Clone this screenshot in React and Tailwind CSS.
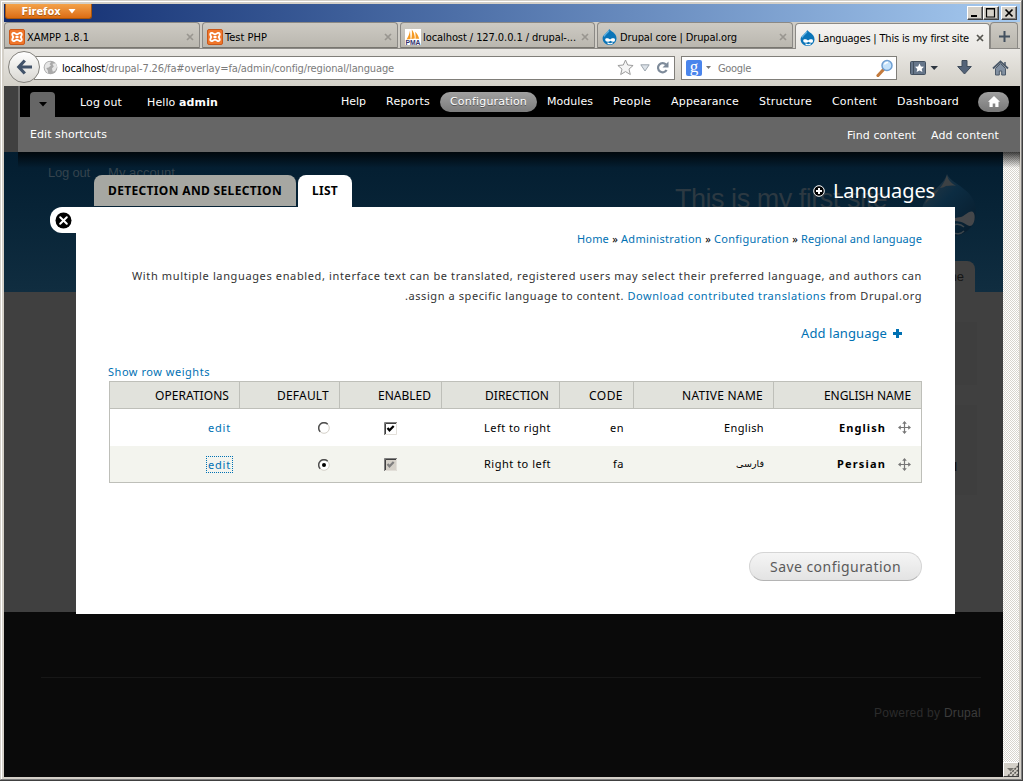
import React, { useLayoutEffect, useRef, useState } from "react";

const TAHOMA = "font-['DejaVu_Sans_Condensed','DejaVu_Sans',sans-serif]";
const VERDANA = "font-['DejaVu_Sans',sans-serif]";
const LUCIDA = "font-['Noto_Sans','Open_Sans',sans-serif]";

// Text set to an exact width by spreading the difference between its letters.
function Fit({ w, className = "", children }) {
  const ref = useRef(null);
  const [style, setStyle] = useState({});
  useLayoutEffect(() => {
    const el = ref.current;
    const natural = el.getBoundingClientRect().width;
    const count = Math.max(1, el.textContent.length);
    setStyle({ width: w, letterSpacing: (w - natural) / count });
  }, [w]);
  return (
    <span ref={ref} style={style} className={`inline-block shrink-0 whitespace-nowrap ${className}`}>
      {children}
    </span>
  );
}

function XamppIcon() {
  return (
    <svg width="16" height="16" viewBox="0 0 16 16" className="shrink-0">
      <rect x="0.5" y="0.5" width="15" height="15" rx="1.5" fill="#f0762a" stroke="#c9581a" />
      <path d="M5.300 4C3.200 3.600 2.900 5 3.600 6.600L4.300 8l-.7 1.400C2.900 11 3.200 12.400 5.300 12L8 10.500l2.700 1.500c2.100.4 2.400-1 1.700-2.600L11.700 8l.7-1.400c.7-1.600.4-3-1.700-2.600L8 5.500zM6.500 8h3" fill="none" stroke="#fff" strokeWidth="1.900" strokeLinejoin="round" />
    </svg>
  );
}

function PmaIcon() {
  return (
    <svg width="16" height="16" viewBox="0 0 16 16" className="shrink-0">
      <rect width="16" height="16" fill="#fff" />
      <path d="M1.500 10.500C3 8 4.500 5 5 1.500l.6 8.600zM6.300 10C7 7 7 4 6.800 .5c2 2.500 3 6 3 9.100zM10.500 9.800c.3-2.500 0-5-.5-7 2.200 2 3.600 4.600 4.200 7z" fill="#f59a23" />
      <text x="8" y="15.800" textAnchor="middle" fontSize="6.500" fontWeight="bold" textLength="15" lengthAdjust="spacingAndGlyphs" fill="#33336c" fontFamily="Liberation Sans">PMA</text>
    </svg>
  );
}

function DrupalIcon() {
  return (
    <svg width="16" height="16" viewBox="0 0 16 16" className="shrink-0">
      <path d="M7.200 0C8.200 2.300 14.500 3.500 14.500 9.300c0 4-3.200 6.700-7 6.700S.6 13.200.6 9.300C.6 5.500 6 3.800 7.200 0z" fill="#0a74b8" />
      <path d="M7 1.500c-.6 2-4 3.300-4.800 6" fill="none" stroke="#5eb0e0" strokeWidth="1.200" />
      <path d="M3.200 10.700c0-2 3.200-1.700 4.900-.2 1.500-1.400 4.900-1.900 4.900.4s-2.700 2.300-4.500.9c-2 1.500-5.300 1-5.300-1.100z" fill="#fff" />
      <path d="M5.500 13.700c1.600 1.300 3.800 1.200 5.200.1" fill="none" stroke="#fff" strokeWidth="1.100" />
    </svg>
  );
}

function CloseX({ dark }) {
  return (
    <svg width="8" height="8" viewBox="0 0 8 8" className="shrink-0">
      <path d="M1 1l6 6M7 1L1 7" stroke={dark ? "#55544f" : "#999690"} strokeWidth="1.700" />
    </svg>
  );
}

function BrowserTab({ icon, title, w, width, active }) {
  return (
    <div
      className={`flex h-[26px] items-center rounded-t-[4px] border border-b-0 pl-[4px] pr-[5px] pt-[2px] text-[11px] text-black ${width} ${
        active ? "border-[#8b8985] bg-linear-to-b from-[#f5f4f2] to-[#eae8e4]" : "border-[#8b8985] bg-linear-to-b from-[#cdcac3] to-[#b9b6ae] shadow-[inset_0_-1px_0_#77756f]"
      }`}
    >
      {icon}
      <div className="flex grow pl-[2px] pt-[3px]">
        <Fit w={w}>{title}</Fit>
      </div>
      <CloseX dark={active} />
    </div>
  );
}

function WinButton({ children }) {
  return (
    <div className="flex h-[14px] w-[16px] items-center justify-center border border-b-[#404040] border-l-white border-r-[#404040] border-t-white bg-[#d4d0c8] shadow-[inset_-1px_-1px_0_#808080]">
      <svg width="14" height="12" viewBox="0 0 14 12" fill="none" stroke="#000">
        {children}
      </svg>
    </div>
  );
}

function TitleBar() {
  return (
    <div className="flex h-[18px] justify-between bg-linear-to-r from-[#102a6e] to-[#a6caf0]">
      <div className="ml-px flex h-[15px] w-[87px] items-center justify-center gap-[7px] rounded-b-[3px] border border-t-0 border-[#a8550c] bg-linear-to-b from-[#f3a248] to-[#dc6c10] text-[11px] font-bold text-white">
        <Fit w={39} className="pt-[2px] leading-[14px] [text-shadow:0_1px_0_#a8550c]">Firefox</Fit>
        <svg width="8" height="5" viewBox="0 0 8 5"><path d="M0.500 0h7L4 4.500z" fill="#fff" /></svg>
      </div>
      <div className="flex items-start pr-[3px] pt-[2px]">
        <WinButton><path d="M3 9h6" strokeWidth="2" /></WinButton>
        <WinButton><path d="M2.500 1v9h8V1M2 2h9" strokeWidth="1.200" /><path d="M2 1.500h9" /></WinButton>
        <div className="ml-[2px]">
          <WinButton><path d="M3.500 2.500l7 7M10.500 2.500l-7 7" strokeWidth="1.700" /></WinButton>
        </div>
      </div>
    </div>
  );
}

function TabStrip() {
  return (
    <div className="flex h-[27px] items-end gap-[2px] border-b border-[#8b8985] bg-[#d0cdc6]">
      <BrowserTab icon={<XamppIcon />} title="XAMPP 1.8.1" w={62} width="w-[196px]" />
      <BrowserTab icon={<XamppIcon />} title="Test PHP" w={42} width="w-[196px]" />
      <BrowserTab icon={<PmaIcon />} title="localhost / 127.0.0.1 / drupal-..." w={153} width="w-[195px]" />
      <BrowserTab icon={<DrupalIcon />} title="Drupal core | Drupal.org" w={117} width="w-[196px]" />
      <div className="-mb-px flex">
        <BrowserTab icon={<DrupalIcon />} title="Languages | This is my first site" w={151} width="w-[195px]" active />
      </div>
      <div className="-ml-[2px] flex h-[26px] w-[28px] items-center justify-center rounded-t-[4px] border border-b-0 border-[#8b8985] bg-linear-to-b from-[#cdcac3] to-[#b9b6ae] pt-[2px]">
        <svg width="11" height="11" viewBox="0 0 11 11"><path d="M5.500 0v11M0 5.500h11" stroke="#43505f" strokeWidth="2" /></svg>
      </div>
    </div>
  );
}

function NavBar() {
  return (
    <div className="flex h-[37px] items-center bg-linear-to-b from-[#eae8e4] to-[#d3d0c8] pl-[4px]">
      <div className="z-10 -mt-[2px] flex size-[32px] shrink-0 items-center justify-center rounded-full border border-[#84827d] bg-linear-to-b from-white to-[#d9d7d2]">
        <svg width="17" height="16" viewBox="0 0 17 16" fill="none" stroke="#42536a" strokeWidth="3.200">
          <path d="M8.800 1.500L2.800 8l6 6.500M3 8h13" />
        </svg>
      </div>
      <div className="-ml-[6px] flex h-[24px] w-[641px] items-center border border-[#807e79] bg-white pl-[8px] pr-[5px] text-[11px] text-[#7b7b7b]">
        <svg width="15" height="15" viewBox="0 0 16 16" className="shrink-0">
          <circle cx="8" cy="8" r="7.300" fill="#a9a9a9" />
          <path d="M2 5.500C4 2 6 1.500 8.500 2L7 4.500l1.500 1L6 8 3.500 8.500 5 11l.5 3C3 12.500 1 10 2 5.500zM10 4l4-.5 1 4-2 4-2.500 1L9.500 9l2-2z" fill="#e6e6e6" />
        </svg>
        <div className="flex grow pl-[4px] pt-[3px]">
          <Fit w={43} className="text-black">localhost</Fit>
          <Fit w={289}>/drupal-7.26/fa#overlay=fa/admin/config/regional/language</Fit>
        </div>
        <svg width="17" height="17" viewBox="0 0 17 17"><path d="M8.500 1l2.200 5 5.400.5-4.100 3.600 1.300 5.400-4.800-2.900-4.800 2.900L5 10.100.9 6.500 6.300 6z" fill="#f5f5f5" stroke="#9b9b9b" /></svg>
        <svg width="10" height="8" viewBox="0 0 10 8" className="ml-[6px]"><path d="M.8.800h8.400L5 7z" fill="#dce2e8" stroke="#9da6ae" /></svg>
        <svg width="13" height="13" viewBox="0 0 13 13" className="ml-[6px]" fill="none">
          <path d="M10 3.600A4.600 4.600 0 1 0 10.600 9" stroke="#7d8a99" strokeWidth="2.200" /><path d="M12.500.5v6h-6z" fill="#7d8a99" />
        </svg>
      </div>
      <div className="ml-[6px] flex h-[24px] w-[216px] items-center border border-[#807e79] bg-white px-[4px] text-[11px] text-[#7b7b7b]">
        <div className="flex size-[16px] items-center justify-center rounded-[2px] bg-[#4a85ec] pb-[2px] font-['Liberation_Serif',serif] text-[17px] leading-none text-white">g</div>
        <svg width="5" height="3" viewBox="0 0 5 3" className="ml-[4px]"><path d="M0 0h5L2.500 3z" fill="#777" /></svg>
        <div className="flex grow pl-[7px] pt-[3px]"><Fit w={33}>Google</Fit></div>
        <svg width="18" height="18" viewBox="0 0 18 18" className="mr-[-2px]">
          <path d="M8 10l-6 6.500" stroke="#c47b3d" strokeWidth="3.200" strokeLinecap="round" />
          <circle cx="11" cy="6.500" r="5" fill="#c4e2fb" stroke="#6f9fd2" strokeWidth="1.500" />
          <path d="M8.500 5.500c.5-1.500 2-2.300 3.500-2" stroke="#fff" strokeWidth="1.500" fill="none" />
        </svg>
      </div>
      <svg width="29" height="16" viewBox="0 0 29 16" className="ml-[13px]">
        <rect x=".5" y="1.500" width="15" height="13" rx="1" fill="#66768a" stroke="#43505f" />
        <path d="M3.500 2v12" stroke="#43505f" />
        <path d="M9.500 3.500l1.400 3 3.100.3-2.300 2.100.7 3.100-2.900-1.600L6.600 12l.7-3.100L5 6.800l3.100-.3z" fill="#fff" />
        <path d="M20.500 6h7.500L24.200 10z" fill="#2d3640" />
      </svg>
      <svg width="15" height="15" viewBox="0 0 15 15" className="ml-[18px]"><path d="M5 .5h5v6h4.300L7.500 14 .7 6.500H5z" fill="#536378" stroke="#3f4c5b" /></svg>
      <svg width="17" height="16" viewBox="0 0 17 16" className="ml-[20px]">
        <path d="M3.500 8.500V15h3.800v-4h2.400v4h3.800V8.500l-5-5z" fill="#8290a1" stroke="#4b5969" />
        <path d="M1 8.500L8.500 1.500 16 8.500" fill="none" stroke="#4b5969" strokeWidth="1.800" /><path d="M13 2v3" stroke="#4b5969" strokeWidth="1.500" />
      </svg>
    </div>
  );
}

const MENU_LEFT = [["Help", 25], ["Reports", 44]];
const MENU_RIGHT = [["Modules", 46], ["People", 38], ["Appearance", 68], ["Structure", 53], ["Content", 45], ["Dashboard", 62]];

function MenuItem({ label, w }) {
  return <div className="px-[10px] pt-px"><Fit w={w}>{label}</Fit></div>;
}

function AdminToolbar() {
  return (
    <div className={`relative z-30 flex h-[66px] bg-[#404040] text-[11px] text-white ${VERDANA}`}>
      <div className="flex w-[14px] flex-col" />
      <div className="flex grow flex-col bg-[#666]">
        <div className="ml-[2px] flex h-[31px] items-center bg-black">
          <div className="mt-[6px] ml-[10px] flex h-[25px] w-[25px] items-center justify-center rounded-t-[4px] bg-[#666]">
            <svg width="8" height="5" viewBox="0 0 8 5"><path d="M0 0h8L4 4.500z" fill="#000" /></svg>
          </div>
          <Fit w={42} className="ml-[25px] pt-[3px]">Log out</Fit>
          <Fit w={71} className="ml-[25px] pt-[3px]">Hello <b>admin</b></Fit>
          <div className="flex grow items-center justify-end pr-[11px] pt-px">
            {MENU_LEFT.map(([l, w]) => <MenuItem key={l} label={l} w={w} />)}
            <div className="flex h-[20px] items-center rounded-full bg-linear-to-b from-[#a0a0a0] to-[#7c7c7c] px-[10px] pt-px">
              <Fit w={77} className="[text-shadow:0_1px_0_#555]">Configuration</Fit>
            </div>
            {MENU_RIGHT.map(([l, w]) => <MenuItem key={l} label={l} w={w} />)}
            <div className="-mt-px ml-[9px] flex h-[20px] w-[31px] items-center justify-center rounded-full bg-linear-to-b from-[#a0a0a0] to-[#787878]">
              <svg width="12" height="11" viewBox="0 0 12 11"><path d="M6 0l6 5.800h-1.500V11H7.300V7.500H4.700V11H1.500V5.800H0z" fill="#fff" /></svg>
            </div>
          </div>
        </div>
        <div className="flex h-[35px] items-center justify-between pl-[12px] pr-[21px] pt-px">
          <Fit w={77}>Edit shortcuts</Fit>
          <div className="flex gap-[15px] pt-[2px]">
            <Fit w={69}>Find content</Fit>
            <Fit w={68}>Add content</Fit>
          </div>
        </div>
      </div>
      <div className="absolute left-[14px] right-0 top-full h-[16px] bg-linear-to-b from-black/75 to-transparent" />
    </div>
  );
}

function SiteLogo() {
  return (
    <svg width="56" height="64" viewBox="0 0 56 64">
      <defs>
        <linearGradient id="drop" x1="0" y1="0" x2=".9" y2="1">
          <stop offset="0" stopColor="#2c3a44" /><stop offset=".45" stopColor="#0c2c42" /><stop offset="1" stopColor="#071c2c" />
        </linearGradient>
      </defs>
      <path d="M26 0c4 11 29 14 29 38 0 16-13 25-27 25S1 54 1 38C1 20 22 14 26 0z" fill="url(#drop)" />
      <path d="M26 1c1 5 4 8 9 11-4-1-7 0-10 0-2 1-4 2-6 2 3-4 5-7 7-13z" fill="#3c4144" />
      <path d="M4 30c2-8 8-12 14-15-2 5-8 8-14 15z" fill="#323b41" />
      <path d="M33 47c-1-4 2-3 7-4 4-1 8-7 12-5 3 2 2 14-3 14-3 0-6-5-16-5z" fill="#45474a" />
      <path d="M31 55c0-6 8-6 12-2M32 58c3 3 8 2 11-1" fill="none" stroke="#3d464c" strokeWidth="1.500" />
    </svg>
  );
}

// The site that lies dimmed behind the overlay.
function SiteBehind() {
  return (
    <div className="flex w-[999px] flex-col font-['Liberation_Sans',sans-serif]">
      <div className="flex h-[140px] shrink-0 flex-col justify-between bg-linear-to-b from-[#031d30] to-[#102d40]">
        <div className="flex items-start pl-[44px] pt-[13px] text-[13px] text-[#34434d]">
          <Fit w={42} className="leading-[16px]">Log out</Fit>
          <Fit w={67} className="ml-[18px] leading-[16px]">My account</Fit>
          <div className="grow" />
          <Fit w={212} className="mt-[17px] text-[27px] leading-[34px] text-[#2c3942]">This is my first site</Fit>
          <div className="-mb-[60px] ml-[34px] mr-[26px] mt-[9px]"><SiteLogo /></div>
        </div>
        <div className="mr-[28px] flex h-[31px] w-[66px] items-center justify-end self-end rounded-t-[8px] bg-[#404040] pr-[11px] text-[13px] text-[#151515]">Home</div>
      </div>
      <div className="flex h-[320px] shrink-0 flex-col items-end gap-[20px] bg-[#404040] pr-[26px] pt-[30px]">
        <div className="h-[63px] w-[200px] bg-[#3e3e3e]" />
        <div className="h-[90px] w-[200px] bg-[#3e3e3e] pr-[20px] pt-[54px] text-right text-[12px] leading-[16px] text-black">l</div>
      </div>
      <div className="flex grow flex-col bg-[#0a0a0a] pl-[37px] pr-[22px] pt-[65px]">
        <div className="flex justify-end border-t border-[#171717] pt-[26px] text-[12px]">
          <Fit w={107} className="text-[#2c2c2c]">Powered by <span className="text-[#3c3c3c]">Drupal</span></Fit>
        </div>
      </div>
    </div>
  );
}

function Scrollbar() {
  return (
    <div className="flex w-[16px] flex-col justify-end bg-[repeating-conic-gradient(#d8d5ce_0_25%,#ffffff_0_50%)] bg-[length:2px_2px]">
      <div className="flex h-[15px] items-center justify-center border border-l-white border-t-white border-b-[#404040] border-r-[#404040] bg-[#d4d0c8]">
        <svg width="14" height="13" viewBox="0 0 14 13">
          <path d="M3 5h7L6.500 8.500z" fill="#77756f" />
          <path d="M14 3L4 13M14 7l-6 6M14 11l-2 2" stroke="#55534f" strokeWidth="1.500" strokeDasharray="2 1" />
        </svg>
      </div>
    </div>
  );
}

function Link({ children }) {
  return <span className="text-[#0071b3]">{children}</span>;
}

const CRUMBS = [["Home", 32], ["Administration", 81], ["Configuration", 75], ["Regional and language", 121]];

function Breadcrumb() {
  return (
    <div className="flex justify-end leading-[20px]">
      {CRUMBS.map(([label, w], i) => (
        <React.Fragment key={label}>
          {i > 0 && <span className="w-[12px] text-center text-black">»</span>}
          <Fit w={w} className="text-[#0071b3]">{label}</Fit>
        </React.Fragment>
      ))}
    </div>
  );
}

function MoveIcon() {
  return (
    <svg width="13" height="13" viewBox="0 0 13 13" className="ml-[12px]">
      <path d="M6.500 1v11M1 6.500h11" stroke="#777" strokeWidth="1.200" />
      <path d="M6.500 0l2.300 2.800H4.200zM6.500 13l2.300-2.800H4.200zM0 6.500l2.800-2.300v4.600zM13 6.500l-2.800-2.300v4.600z" fill="#777" />
    </svg>
  );
}

function Radio({ on }) {
  return (
    <svg width="12" height="12" viewBox="0 0 12 12">
      <circle cx="6" cy="6" r="5.300" fill="#fff" stroke="#d4d0c8" />
      <path d="M2.200 9.700A5.300 5.300 0 0 1 9.700 2.200" fill="none" stroke="#505050" strokeWidth="1.500" />
      {on && <circle cx="6" cy="6" r="2" fill="#000" />}
    </svg>
  );
}

function Check({ disabled }) {
  return (
    <svg width="13" height="13" viewBox="0 0 13 13">
      <rect width="13" height="13" fill={disabled ? "#d4d0c8" : "#fff"} />
      <path d="M.5 13V.5H13" fill="none" stroke="#808080" />
      <path d="M1.500 12V1.500H12" fill="none" stroke="#404040" />
      <path d="M1 12.500h11.500V1" fill="none" stroke="#e2dfd9" />
      <path d="M3.500 6l2 2.300L9.700 4" fill="none" stroke={disabled ? "#808080" : "#000"} strokeWidth="2.200" />
    </svg>
  );
}

const COLS = "grid grid-cols-[130px_100px_102px_118px_74px_140px_147px]";
const HEADS = [["OPERATIONS", 74], ["DEFAULT", 52], ["ENABLED", 53], ["DIRECTION", 64], ["CODE", 34], ["NATIVE NAME", 81], ["ENGLISH NAME", 87]];

function Row({ focus, on, dir, code, native, name, nameW, nativeW, disabled, className }) {
  return (
    <div className={`${COLS} items-center text-right ${className}`}>
      <div className="flex justify-end pr-[7px]">
        <span className={`flex border border-dotted px-px ${focus ? "border-[#0071b3]" : "border-transparent"}`}>
          <Fit w={23} className="leading-[15px] text-[#0071b3]">edit</Fit>
        </span>
      </div>
      <div className="flex justify-end pr-[10px] pt-px"><Radio on={on} /></div>
      <div className="flex justify-center pr-px pt-px"><Check disabled={disabled} /></div>
      <div className="flex justify-end pr-[9px] pt-px"><Fit w={67}>{dir}</Fit></div>
      <div className="flex justify-end pr-[10px] pt-px"><Fit w={code === "en" ? 14 : 11}>{code}</Fit></div>
      <div className="flex justify-end pr-[10px] pt-px">{nativeW ? <Fit w={nativeW}>{native}</Fit> : <span className="font-['DejaVu_Sans',sans-serif] text-[9.5px]">{native}</span>}</div>
      <div className="flex items-center justify-end pr-[10px] font-bold"><Fit w={nameW} className="pt-px">{name}</Fit><MoveIcon /></div>
    </div>
  );
}

function LanguageTable() {
  return (
    <div className="w-[813px] border border-[#bebfb9] text-[11px] text-black">
      <div className={`${COLS} h-[27px] border-b border-[#bebfb9] bg-[#e1e2dc]`}>
        {HEADS.map(([h, w], i) => (
          <div key={h} className={`flex items-center justify-end border-[#bebfb9] pr-[10px] pt-px text-[12px] ${i < 6 ? "border-r" : ""}`}>
            <Fit w={w}>{h}</Fit>
          </div>
        ))}
      </div>
      <Row className="h-[37px] bg-white" dir="Left to right" code="en" native="English" nativeW={40} name="English" nameW={47} />
      <Row className="h-[36px] bg-[#f3f4ee]" focus on disabled dir="Right to left" code="fa" native="فارسی" name="Persian" nameW={49} />
    </div>
  );
}

function Overlay() {
  return (
    <div className={`absolute left-[46px] top-[23px] z-20 flex w-[905px] flex-col ${LUCIDA}`}>
      <div className="flex h-[32px] items-start gap-[2px] pl-[44px] pr-[20px] text-[12px] font-bold text-black">
        <div className="flex h-[31px] w-[202px] items-center justify-center rounded-t-[8px] bg-[#a6a7a2] pt-px">
          <Fit w={174}>DETECTION AND SELECTION</Fit>
        </div>
        <div className="flex h-[32px] w-[54px] items-center justify-center rounded-t-[8px] bg-white">
          <Fit w={26}>LIST</Fit>
        </div>
        <div className="flex grow items-center justify-end gap-[8px] self-stretch font-normal text-white">
          <svg width="12" height="12" viewBox="0 0 12 12"><circle cx="6" cy="6" r="5.300" fill="#000" stroke="#fff" /><path d="M6 3v6M3 6h6" stroke="#fff" strokeWidth="2" /></svg>
          <Fit w={102} className="text-[20px] leading-[30px]">Languages</Fit>
        </div>
      </div>
      <div className="flex">
        <div className="flex h-[26px] w-[26px] shrink-0 items-center justify-center rounded-l-[12px] bg-white">
          <svg width="17" height="17" viewBox="0 0 17 17"><circle cx="8.500" cy="8.500" r="8" fill="#000" /><path d="M5.200 5.200l6.600 6.600M11.800 5.200l-6.600 6.600" stroke="#fff" strokeWidth="2" strokeLinecap="round" /></svg>
        </div>
        <div className="flex h-[407px] w-[879px] flex-col bg-white pl-[33px] pr-[33px] pt-[22px] text-[11px] text-[#333]">
          <Breadcrumb />
          <div className="mt-[17px] flex flex-col items-end leading-[20px]">
            <Fit w={790}>With multiple languages enabled, interface text can be translated, registered users may select their preferred language, and authors can</Fit>
            <Fit w={517}>.assign a specific language to content. <Link>Download contributed translations</Link> from Drupal.org</Fit>
          </div>
          <div className="mt-[17px] flex items-center justify-end gap-[6px] pr-[20px] text-[13px] leading-[20px]">
            <Fit w={86} className="text-[#0071b3]">Add language</Fit>
            <svg width="9" height="9" viewBox="0 0 9 9"><path d="M4.500 0v9M0 4.500h9" stroke="#0071b3" strokeWidth="3" /></svg>
          </div>
          <div className="-ml-px mt-[19px] flex h-[19px] leading-[20px]">
            <Fit w={102} className="text-[#0071b3]">Show row weights</Fit>
          </div>
          <LanguageTable />
          <div className="mt-[69px] flex h-[29px] w-[173px] items-center justify-center self-end rounded-full border border-[#d5d5d5] border-b-[#b4b4b4] bg-linear-to-b from-[#f5f5f5] to-[#e3e3e3] text-[14px] text-[#5a5a5a]">
            <Fit w={131}>Save configuration</Fit>
          </div>
        </div>
      </div>
    </div>
  );
}

export default function App() {
  return (
    <div className={`flex h-[781px] w-[1023px] flex-col overflow-hidden border-b-[1px] border-r-[1px] border-[#404040] bg-[#d4d0c8] ${TAHOMA}`}>
      <div className="flex grow flex-col border border-b-[#808080] border-l-[#d4d0c8] border-r-[#808080] border-t-[#d4d0c8]">
        <div className="flex grow flex-col border-l border-t border-white pb-[2px] pl-[2px] pr-[1px] pt-[2px]">
          <TitleBar />
          <TabStrip />
          <NavBar />
          <AdminToolbar />
          <div className="relative flex grow">
            <SiteBehind />
            <Scrollbar />
            <Overlay />
          </div>
        </div>
      </div>
    </div>
  );
}
